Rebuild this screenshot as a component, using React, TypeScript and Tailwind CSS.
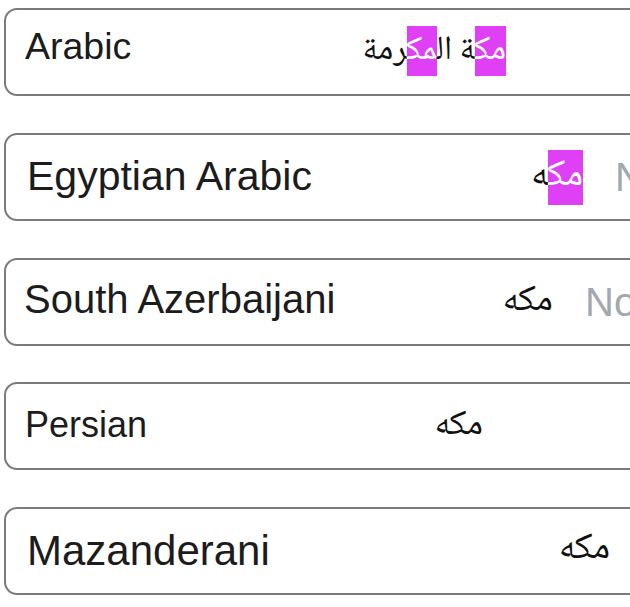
import React from "react";

type Part = { t: string; hl?: boolean };
type Row = {
  label: string;
  labelCls: string;
  innerCls: string;
  rowPad: string;
  valueCls: string;
  hlCls?: string;
  value: Part[];
  placeholder?: string;
};

const rows: Row[] = [
  {
    label: "Arabic",
    labelCls: "text-[37.5px] mb-[11px]",
    innerCls: "w-[481px]",
    rowPad: "pl-[19px]",
    valueCls: "text-[34px]",
    hlCls:
      "bg-[linear-gradient(to_bottom,transparent_3px,#e040f5_3px,#e040f5_calc(100%-5px),transparent_calc(100%-5px))]",
    value: [{ t: "مك", hl: true }, { t: "ة ال" }, { t: "مك", hl: true }, { t: "رمة" }],
  },
  {
    label: "Egyptian Arabic",
    labelCls: "text-[41px] mb-0",
    innerCls: "w-[556px]",
    rowPad: "pl-[21px]",
    valueCls: "text-[38px]",
    hlCls:
      "bg-[linear-gradient(to_bottom,transparent_6px,#e040f5_6px,#e040f5_calc(100%-4px),transparent_calc(100%-4px))]",
    value: [{ t: "مك", hl: true }, { t: "ه" }],
    placeholder: "No",
  },
  {
    label: "South Azerbaijani",
    labelCls: "text-[40px] mb-[5px]",
    innerCls: "w-[529px]",
    rowPad: "pl-[18px]",
    valueCls: "text-[37px]",
    value: [{ t: "مكه" }],
    placeholder: "No",
  },
  {
    label: "Persian",
    labelCls: "text-[36px] mb-[3px]",
    innerCls: "w-[458px]",
    rowPad: "pl-[19px]",
    valueCls: "text-[35.5px]",
    value: [{ t: "مكه" }],
  },
  {
    label: "Mazanderani",
    labelCls: "text-[42px] mb-0",
    innerCls: "w-[583px]",
    rowPad: "pl-[21px]",
    valueCls: "text-[37.5px]",
    value: [{ t: "مكه" }],
  },
];

export default function App() {
  return (
    <div className="w-[630px] h-[607px] overflow-hidden bg-white pt-2 pl-1">
      <div className="flex flex-col gap-[36.8px]">
        {rows.map((r) => (
          <div
            key={r.label}
            className={`flex items-center h-[88px] w-[720px] shrink-0 rounded-[13px] border-2 border-[#7b7b7b] bg-white ${r.rowPad}`}
          >
            <div className={`flex items-center justify-between shrink-0 ${r.innerCls}`}>
              <span
                className={`whitespace-nowrap text-[#1c1c1c] leading-none ${r.labelCls}`}
                style={{ fontFamily: '"Liberation Sans", Arial, sans-serif' }}
              >
                {r.label}
              </span>
              <span
                dir="rtl"
                className={`whitespace-nowrap leading-none text-[#111] ${r.valueCls}`}
                style={{ fontFamily: '"Noto Naskh Arabic", "Noto Sans Arabic", "DejaVu Sans", sans-serif' }}
              >
                {r.value.map((p, i) =>
                  p.hl ? (
                    <span key={i} className={`text-white ${r.hlCls ?? ""}`}>
                      {p.t}
                    </span>
                  ) : (
                    <span key={i}>{p.t}</span>
                  )
                )}
              </span>
            </div>
            {r.placeholder && (
              <span
                className="ml-8 whitespace-nowrap text-[40px] leading-none text-[#a3a8b0]"
                style={{ fontFamily: '"Liberation Sans", Arial, sans-serif' }}
              >
                {r.placeholder}
              </span>
            )}
          </div>
        ))}
      </div>
    </div>
  );
}
